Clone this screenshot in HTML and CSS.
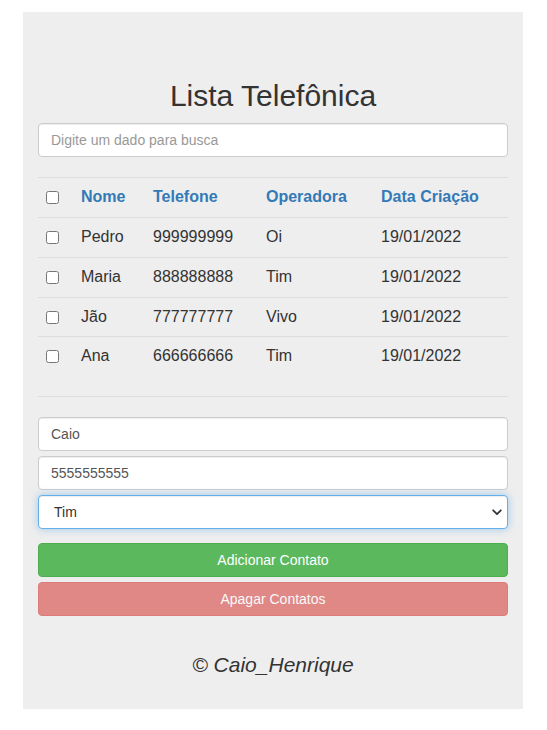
FILE: index.html
```html
<!DOCTYPE html>
<html lang="pt-BR">
<head>
<meta charset="utf-8">
<title>Lista Telefônica</title>
<link rel="stylesheet" href="styles.css">
</head>
<body>
<div class="jumbotron">
  <h1 class="title">Lista Telefônica</h1>
  <input class="form-control search" type="text" placeholder="Digite um dado para busca">
  <table class="table">
    <colgroup>
      <col class="c-check"><col class="c-nome"><col class="c-tel"><col class="c-op"><col class="c-data">
    </colgroup>
    <thead>
      <tr>
        <th><input type="checkbox" class="chk"></th>
        <th>Nome</th>
        <th>Telefone</th>
        <th>Operadora</th>
        <th>Data Criação</th>
      </tr>
    </thead>
    <tbody>
      <tr><td><input type="checkbox" class="chk"></td><td>Pedro</td><td>999999999</td><td>Oi</td><td>19/01/2022</td></tr>
      <tr><td><input type="checkbox" class="chk"></td><td>Maria</td><td>888888888</td><td>Tim</td><td>19/01/2022</td></tr>
      <tr><td><input type="checkbox" class="chk"></td><td>Jão</td><td>777777777</td><td>Vivo</td><td>19/01/2022</td></tr>
      <tr><td><input type="checkbox" class="chk"></td><td>Ana</td><td>666666666</td><td>Tim</td><td>19/01/2022</td></tr>
    </tbody>
  </table>
  <hr class="divider">
  <form class="add-form">
    <input class="form-control" type="text" value="Caio">
    <input class="form-control" type="text" value="5555555555">
    <div class="select-wrap">
      <select class="form-control select is-focused">
        <option>Tim</option>
        <option>Oi</option>
        <option>Vivo</option>
      </select>
      <svg class="chevron" width="10" height="7" viewBox="0 0 10 7" aria-hidden="true">
        <path d="M1.2 1.3 L5 5.1 L8.8 1.3" fill="none" stroke="#333" stroke-width="1.8" stroke-linecap="round" stroke-linejoin="round"/>
      </svg>
    </div>
    <button type="button" class="btn btn-success">Adicionar Contato</button>
    <button type="button" class="btn btn-danger" disabled>Apagar Contatos</button>
  </form>
  <p class="footer">© Caio_Henrique</p>
</div>
</body>
</html>
```

FILE: styles.css
```css
* {
  box-sizing: border-box;
}

body {
  margin: 0;
  padding-right: 1px;
  background: #fff;
  font-family: "Liberation Sans", Arial, Helvetica, sans-serif;
  color: #333;
  font-size: 14px;
}

.jumbotron {
  width: 500px;
  margin: 12px auto 21px;
  background: #eee;
  padding: 67px 15px 29px;
  display: flex;
  flex-direction: column;
}

.title {
  margin: 0;
  font-size: 30px;
  font-weight: 400;
  line-height: 33px;
  text-align: center;
  color: #333;
}

.form-control {
  display: block;
  width: 100%;
  height: 34px;
  padding: 6px 12px;
  font-family: inherit;
  font-size: 14px;
  line-height: 20px;
  color: #555;
  background: #fff;
  border: 1px solid #ccc;
  border-radius: 4px;
  box-shadow: inset 0 1px 1px rgba(0, 0, 0, 0.075);
  outline: none;
}

.form-control::placeholder {
  color: #999;
}

.search {
  margin-top: 11px;
}

.table {
  width: 100%;
  margin-top: 20px;
  border-collapse: collapse;
  table-layout: fixed;
  font-size: 16px;
  color: #333;
}

.c-check { width: 35px; }
.c-nome { width: 72px; }
.c-tel { width: 113px; }
.c-op { width: 115px; }
.c-data { width: 135px; }

.table th,
.table td {
  padding: 8px;
  line-height: 22.86px;
  text-align: left;
  vertical-align: middle;
}

.table th {
  font-weight: 700;
  color: #337ab7;
  border-top: 1px solid #ddd;
}

.table tbody td {
  border-top: 1px solid #ddd;
}

.chk {
  display: block;
  width: 13px;
  height: 13px;
  margin: 0;
}

.divider {
  margin: 20px 0 0;
  border: 0;
  border-top: 1px solid #ddd;
  height: 0;
}

.add-form {
  margin-top: 20px;
  display: flex;
  flex-direction: column;
  gap: 5px;
}

.select-wrap {
  position: relative;
}

.select {
  appearance: none;
  -webkit-appearance: none;
  padding-left: 15px;
  color: #333;
}

.select.is-focused {
  border-color: #66afe9;
  box-shadow: inset 0 1px 1px rgba(0, 0, 0, 0.075), 0 0 8px rgba(102, 175, 233, 0.6);
}

.chevron {
  position: absolute;
  right: 6px;
  top: 14px;
  pointer-events: none;
}

.btn {
  display: block;
  width: 100%;
  height: 34px;
  padding: 6px 12px;
  font-family: inherit;
  font-size: 14px;
  line-height: 20px;
  color: #fff;
  border: 1px solid transparent;
  border-radius: 4px;
  text-align: center;
}

.btn-success {
  margin-top: 9px;
  background: #5cb85c;
  border-color: #4cae4c;
}

.btn-danger {
  background: #d9534f;
  border-color: #d43f3a;
  opacity: 0.65;
}

.footer {
  margin: 34px 0 0;
  font-size: 21px;
  line-height: 30px;
  font-style: italic;
  text-align: center;
  color: #333;
}
```
